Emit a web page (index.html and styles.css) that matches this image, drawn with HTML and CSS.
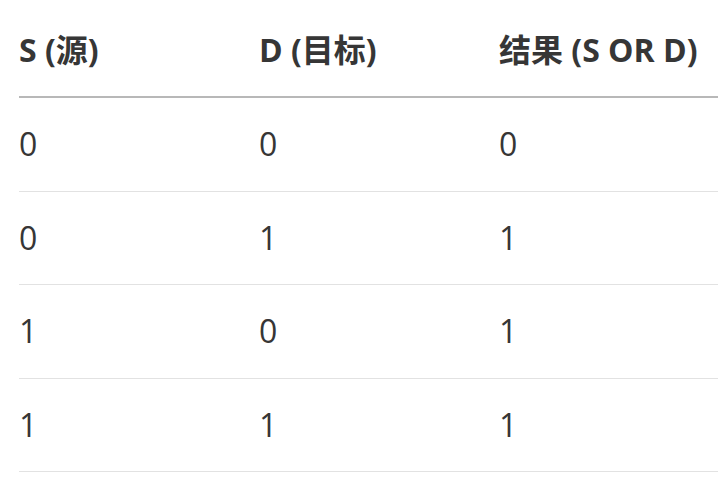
FILE: index.html
```html
<!DOCTYPE html>
<html lang="zh">
<head>
<meta charset="utf-8">
<link rel="stylesheet" href="styles.css">
</head>
<body>
<table class="truth">
  <colgroup><col class="c1"><col class="c2"><col class="c3"></colgroup>
  <thead>
    <tr><th>S (源)</th><th>D (目标)</th><th>结果 (S OR D)</th></tr>
  </thead>
  <tbody>
    <tr><td>0</td><td>0</td><td>0</td></tr>
    <tr><td>0</td><td>1</td><td>1</td></tr>
    <tr><td>1</td><td>0</td><td>1</td></tr>
    <tr><td>1</td><td>1</td><td>1</td></tr>
  </tbody>
</table>
</body>
</html>
```
FILE: styles.css
```css
html, body {
  margin: 0;
  padding: 0;
  background: #ffffff;
}
.truth {
  margin: 3px 0 0 19px;
  width: 699px;
  border-collapse: collapse;
  table-layout: fixed;
  font-family: "Open Sans", "Noto Sans CJK SC", sans-serif;
  font-size: 32px;
  color: #363636;
}
.c1, .c2 { width: 240px; }
.truth th {
  text-align: left;
  font-weight: 700;
  padding: 0;
  height: 93px;
  line-height: 46px;
  vertical-align: middle;
  border-bottom: 2px solid #b8b8b8;
}
.truth td {
  padding: 0;
  height: 92.5px;
  line-height: 46px;
  vertical-align: middle;
  border-bottom: 1px solid #e2e2e2;
}
```
